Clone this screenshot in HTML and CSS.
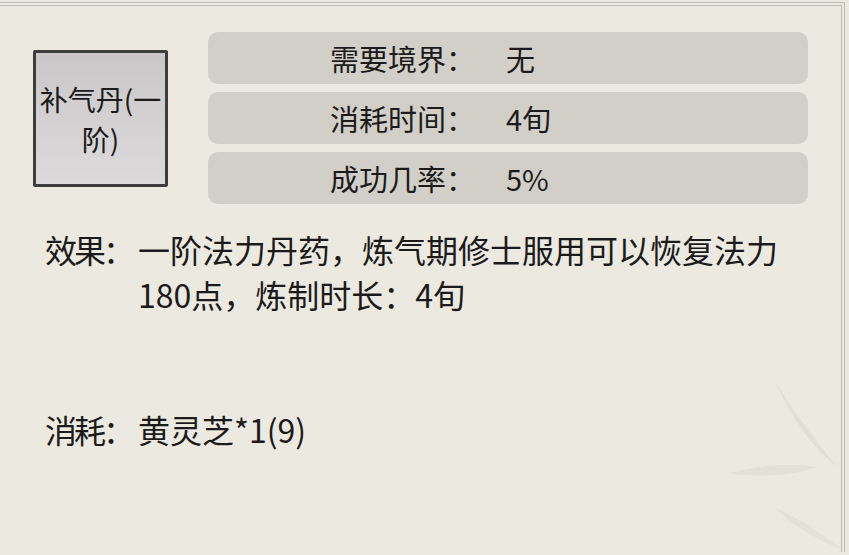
FILE: index.html
```html
<!DOCTYPE html>
<html lang="zh">
<head>
<meta charset="utf-8">
<title>补气丹</title>
<link rel="stylesheet" href="styles.css">
</head>
<body>
<div class="panel">
  <div class="frame"></div>
  <svg class="leaves" width="120" height="200" viewBox="0 0 120 200">
    <path d="M45 25 C62 60 80 90 108 112 C86 84 64 56 45 25 Z" fill="#d6d2c9" opacity="0.45"/>
    <path d="M0 118 C30 110 60 108 88 112 C60 121 30 123 0 118 Z" fill="#d8d4cb" opacity="0.45"/>
    <path d="M45 152 C68 162 90 178 115 195 C90 186 64 171 45 152 Z" fill="#d8d4cb" opacity="0.4"/>
  </svg>
  <div class="top">
    <div class="item">补气丹(一阶)</div>
    <div class="rows">
      <div class="row"><span class="label">需要境界：</span><span class="value">无</span></div>
      <div class="row"><span class="label">消耗时间：</span><span class="value">4旬</span></div>
      <div class="row"><span class="label">成功几率：</span><span class="value">5%</span></div>
    </div>
  </div>
  <div class="effect">
    <span class="effect-label">效果：</span>
    <span class="effect-text">一阶法力丹药，炼气期修士服用可以恢复法力180点，炼制时长：4旬</span>
  </div>
  <div class="cost">
    <span class="effect-label">消耗：</span>
    <span class="cost-text">黄灵芝*1(9)</span>
  </div>
</div>
</body>
</html>
```

FILE: styles.css
```css
html, body {
  margin: 0;
  padding: 0;
  background: #ece9e1;
}
body {
  width: 849px;
  height: 555px;
  overflow: hidden;
  font-family: "Noto Sans CJK SC", "Noto Sans", sans-serif;
  color: #1b1b1b;
}
.panel {
  position: relative;
  width: 849px;
  height: 555px;
  box-sizing: border-box;
  padding: 32px 0 0 33px;
}
.frame {
  position: absolute;
  top: 2px;
  left: -6px;
  right: 4px;
  bottom: 3px;
  border-top: 4px double #bdbab3;
  border-right: 4px double #bdbab3;
  pointer-events: none;
}
.leaves {
  position: absolute;
  right: 0;
  bottom: 0;
}
.top {
  display: flex;
  align-items: flex-start;
  gap: 40px;
}
.item {
  margin-top: 18px;
  width: 135px;
  height: 137px;
  box-sizing: border-box;
  border: 3px solid #3d3d3d;
  border-radius: 2px;
  background: linear-gradient(#c9c7c8, #dcdadb);
  display: flex;
  align-items: center;
  justify-content: center;
  text-align: center;
  font-size: 28px;
  line-height: 40px;
  padding: 0 1px;
}
.rows {
  display: flex;
  flex-direction: column;
  gap: 8px;
  width: 600px;
}
.row {
  height: 52px;
  background: #d2cfc9;
  border-radius: 10px;
  display: flex;
  align-items: center;
  padding-left: 122px;
  font-size: 29px;
}
.label {
  width: 176px;
}
.effect,
.cost {
  display: flex;
  margin-left: 12px;
  font-size: 32px;
  line-height: 45px;
}
.effect {
  margin-top: 23px;
}
.cost {
  margin-top: 90px;
}
.effect-label {
  width: 93px;
  flex: none;
  white-space: nowrap;
  letter-spacing: -3px;
}
.effect-text {
  width: 680px;
}
```
